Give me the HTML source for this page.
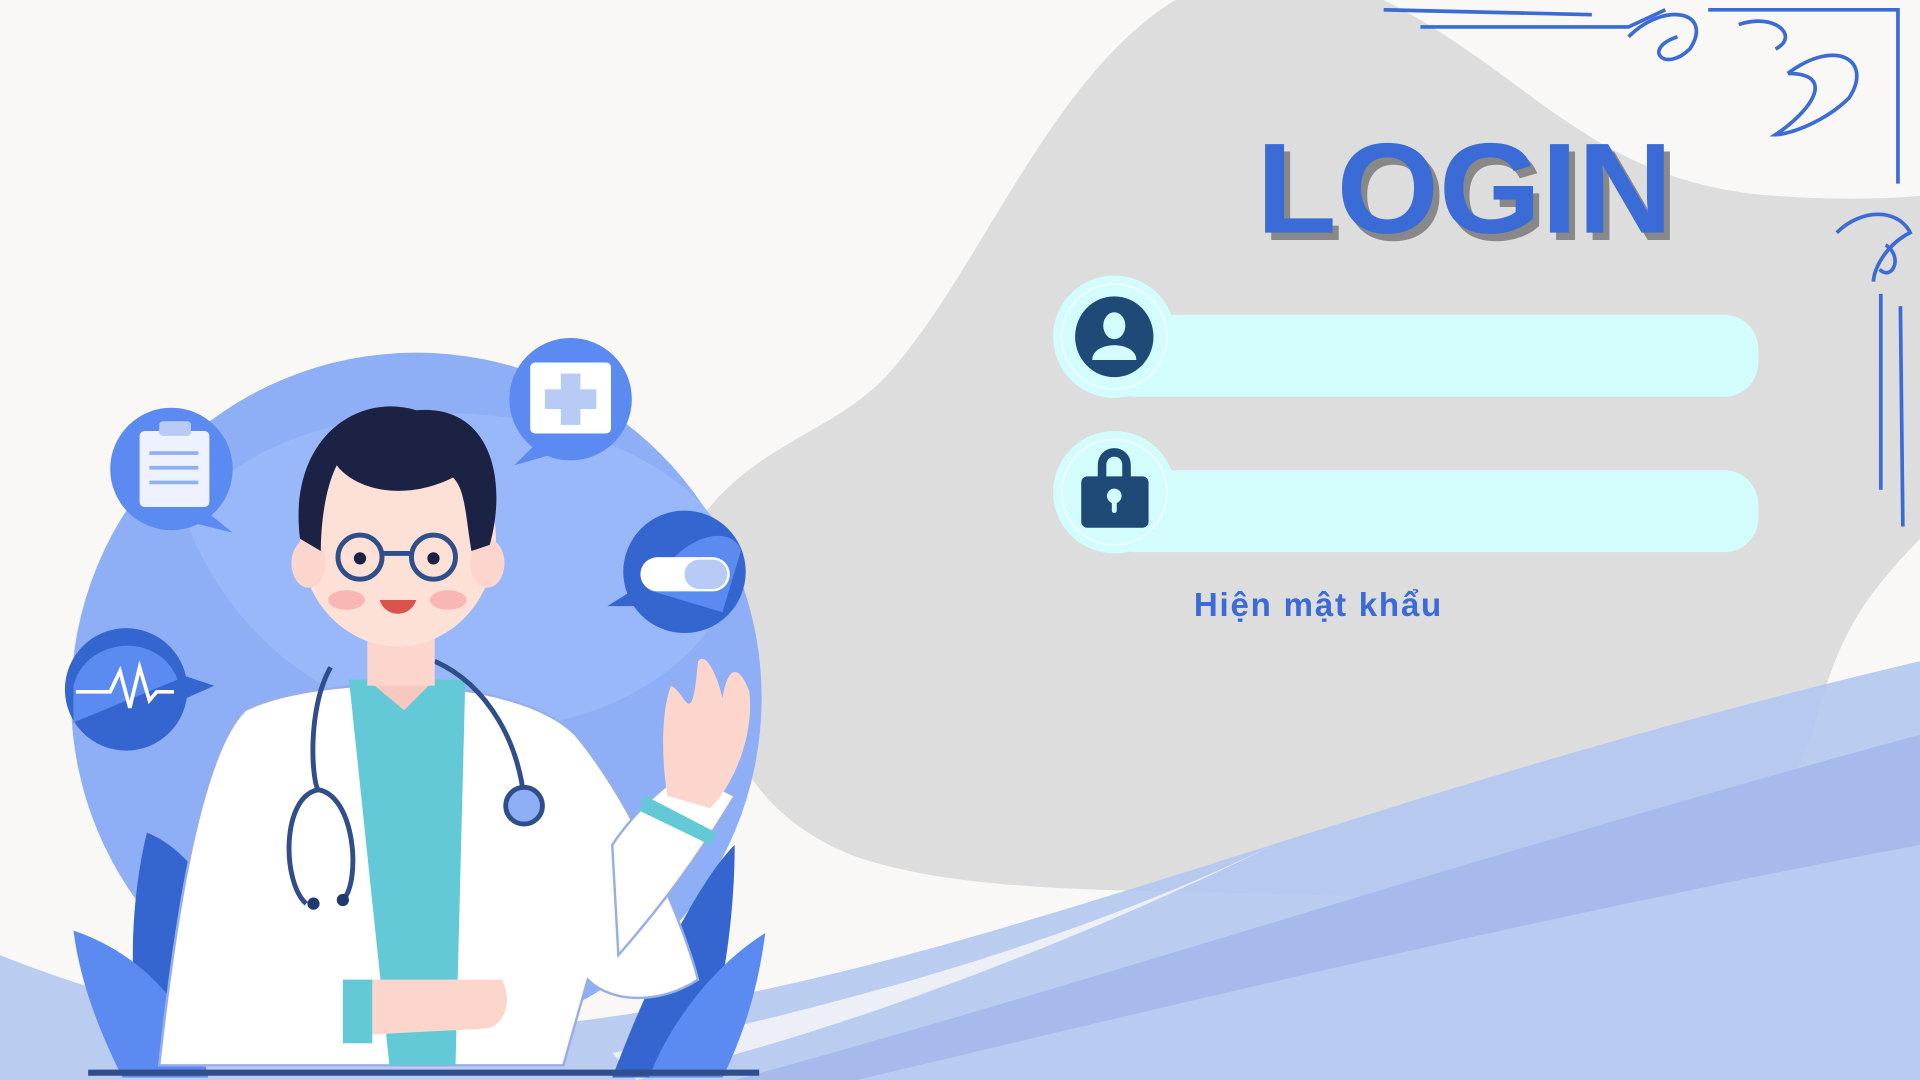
<!DOCTYPE html>
<html><head><meta charset="utf-8"><style>
html,body{margin:0;padding:0;width:1920px;height:1080px;overflow:hidden;background:#f9f8f6}
svg{display:block}
</style></head><body>
<svg width="1920" height="1080" viewBox="0 0 1568 882" xmlns="http://www.w3.org/2000/svg">
<rect width="1568" height="882" fill="#f9f8f6"/>
<path d="M575,420 C620,360 690,350 730,300 C800,220 860,60 960,0 L1130,0 C1250,60 1300,150 1450,160 C1520,165 1568,160 1568,160 L1568,440 C1520,490 1500,520 1480,600 C1440,700 1380,750 1250,740 C1000,720 820,740 700,700 C620,670 560,600 575,420 Z" fill="#dddddd"/>
<path d="M0,780 C150,840 300,860 500,830 C800,790 1100,650 1568,540 L1568,882 L0,882 Z" fill="#b4c7f1" opacity="0.9"/>
<path d="M600,882 C900,800 1200,700 1568,600 L1568,882 Z" fill="#a6bbec"/>
<path d="M700,882 C1000,810 1300,740 1568,690 L1568,882 Z" fill="#b8cbf3"/>
<path d="M500,860 C700,820 900,760 1050,685 C900,760 700,840 520,882 Z" fill="#f9f8f6" opacity="0.8"/>
<path d="M40,715 C120,790 250,830 450,830 C300,840 150,820 40,715Z" fill="#f9f8f6" opacity="0.6"/>
<g fill="none" stroke="#3a6bd6" stroke-width="3">
<path d="M1130,8 L1300,12 M1160,22 L1330,22 L1360,8"/>
<path d="M1395,8 L1550,8 L1550,150"/>
<path d="M1536,240 L1536,400 M1552,250 L1554,430"/>
<path d="M1330,30 C1360,0 1400,10 1380,40 C1360,60 1340,40 1370,30"/>
<path d="M1420,20 C1450,10 1470,30 1450,40 M1460,60 C1500,30 1530,50 1510,80 C1490,100 1460,110 1450,110 C1480,90 1500,60 1460,60"/>
<path d="M1500,190 C1520,170 1550,170 1560,190 C1540,200 1530,220 1530,230 M1540,200 C1555,210 1545,230 1535,220"/>
</g>
<text x="1026" y="190" font-family="Liberation Sans, sans-serif" font-weight="bold" font-size="105" fill="#888" transform="translate(5,6)" textLength="340" lengthAdjust="spacingAndGlyphs">LOGIN</text>
<text x="1026" y="190" font-family="Liberation Sans, sans-serif" font-weight="bold" font-size="105" fill="#3a6bd6" textLength="340" lengthAdjust="spacingAndGlyphs">LOGIN</text>
<rect x="900" y="257" width="536" height="67" rx="28" fill="#d3fcfc"/>
<circle cx="910" cy="275" r="50" fill="#d3fcfc"/>
<circle cx="910" cy="275" r="43" fill="none" stroke="#f0ffff" stroke-width="1.5"/>
<ellipse cx="910" cy="275" rx="32" ry="33" fill="#1f4a78"/>
<ellipse cx="910" cy="266" rx="9" ry="11" fill="#d3fcfc"/>
<path d="M892,294 C892,278 928,278 928,294 Z" fill="#d3fcfc"/>
<rect x="900" y="384" width="536" height="67" rx="28" fill="#d3fcfc"/>
<circle cx="910" cy="402" r="50" fill="#d3fcfc"/>
<circle cx="910" cy="402" r="43" fill="none" stroke="#f0ffff" stroke-width="1.5"/>
<path d="M900,390 L900,380 C900,366 920,366 920,380 L920,390" fill="none" stroke="#1f4a78" stroke-width="7"/>
<rect x="883" y="389" width="55" height="42" rx="5" fill="#1f4a78"/>
<circle cx="910" cy="405" r="6" fill="#d3fcfc"/><rect x="908" y="405" width="4" height="14" rx="2" fill="#d3fcfc"/>
<text x="975" y="503" font-family="Liberation Sans, sans-serif" font-weight="bold" font-size="27" fill="#3a6bd6" textLength="202">Hiện mật khẩu</text>
<circle cx="340" cy="570" r="282" fill="#8eaef5"/>
<path d="M150,420 C250,300 500,320 580,420 C630,480 560,560 470,585 C340,620 200,560 150,420Z" fill="#9bbafa" opacity="0.8"/>
<circle cx="140" cy="383" r="50" fill="#5b8af0"/><path d="M165,415 L190,435 L150,425Z" fill="#5b8af0"/>
<rect x="114" y="352" width="57" height="62" rx="4" fill="#eef2ff"/><rect x="130" y="344" width="26" height="12" rx="3" fill="#b8cbf7"/>
<g stroke="#8eaef5" stroke-width="3"><line x1="122" y1="370" x2="162" y2="370"/><line x1="122" y1="382" x2="162" y2="382"/><line x1="122" y1="394" x2="162" y2="394"/></g>
<circle cx="466" cy="326" r="50" fill="#5b8af0"/><path d="M440,360 L420,380 L455,370Z" fill="#5b8af0"/>
<rect x="433" y="296" width="66" height="58" rx="4" fill="#fff"/>
<path d="M458,305 h16 v13 h13 v16 h-13 v13 h-16 v-13 h-13 v-16 h13Z" fill="#b8cbf7"/>
<circle cx="559" cy="467" r="50" fill="#3566d0"/><path d="M530,482 C560,430 600,430 605,450 L590,500Z" fill="#5b8af0"/><path d="M520,480 L496,495 L530,495Z" fill="#3566d0"/>
<rect x="523" y="455" width="73" height="28" rx="14" fill="#fff"/><rect x="559" y="457" width="35" height="24" rx="12" fill="#b8cbf7"/>
<circle cx="103" cy="563" r="50" fill="#3566d0"/><path d="M60,560 C70,520 130,515 145,555 L60,590Z" fill="#5b8af0"/><path d="M145,550 L175,560 L148,572Z" fill="#3566d0"/>
<polyline points="62,565 90,565 98,548 106,578 114,545 122,572 128,565 142,565" fill="none" stroke="#fff" stroke-width="3"/>
<path d="M120,680 C170,700 210,780 200,870 L120,870 C100,800 110,720 120,680Z" fill="#3566d0"/>
<path d="M60,760 C120,780 160,830 170,880 L100,880 C80,840 65,800 60,760Z" fill="#5b8af0"/>
<path d="M600,690 C570,720 530,800 500,880 L570,880 C590,820 600,750 600,690Z" fill="#3566d0"/>
<path d="M625,762 C580,790 545,840 530,880 L590,880 C610,840 620,800 625,762Z" fill="#5b8af0"/>
<path d="M200,580 C260,550 420,550 470,600 C520,660 560,760 570,800 C540,820 500,820 480,800 L460,870 L130,870 C140,780 160,620 200,580Z" fill="#ffffff" stroke="#98aee8" stroke-width="2"/>
<path d="M285,555 L380,555 L372,870 L318,870Z" fill="#63c9d6"/>
<path d="M300,555 L330,580 L355,555Z" fill="#f7c8bf"/>
<path d="M500,690 C520,660 545,640 560,630 L600,650 C570,700 540,740 505,780Z" fill="#fff" stroke="#98aee8" stroke-width="2"/>
<path d="M527,650 L585,680 L580,690 L522,662Z" fill="#63c9d6"/>
<path d="M545,650 C540,620 540,580 548,560 C560,565 565,600 570,540 C578,530 588,560 590,570 C595,540 605,545 612,565 C616,600 600,640 580,660Z" fill="#fcd6cd"/>
<path d="M300,800 L410,800 C420,820 410,840 395,840 L300,845Z" fill="#fcd6cd"/>
<rect x="280" y="800" width="24" height="52" fill="#63c9d6"/>
<path d="M270,545 C250,580 255,640 260,645 C230,650 230,720 250,738 M260,645 C290,650 295,720 280,735 M355,540 C400,560 425,610 428,655" fill="none" stroke="#2f4e8a" stroke-width="4"/>
<circle cx="428" cy="658" r="15" fill="#8eaef5" stroke="#2f4e8a" stroke-width="4"/>
<circle cx="256" cy="738" r="5" fill="#1f3a6e"/><circle cx="280" cy="735" r="5" fill="#1f3a6e"/>
<rect x="300" y="500" width="55" height="60" fill="#fcd6cd"/>
<ellipse cx="325" cy="440" rx="80" ry="88" fill="#fde0d6"/>
<ellipse cx="252" cy="460" rx="14" ry="20" fill="#fcd6cd"/><ellipse cx="398" cy="460" rx="14" ry="20" fill="#fcd6cd"/>
<path d="M245,440 C235,360 290,320 340,335 C400,330 415,390 400,445 L385,450 C380,420 380,400 370,390 C330,410 290,400 275,380 C265,400 262,430 262,450Z" fill="#1b2244"/>
<circle cx="294" cy="455" r="18" fill="none" stroke="#2f4e8a" stroke-width="4"/><circle cx="354" cy="455" r="18" fill="none" stroke="#2f4e8a" stroke-width="4"/>
<line x1="312" y1="452" x2="336" y2="452" stroke="#2f4e8a" stroke-width="4"/>
<circle cx="294" cy="456" r="5" fill="#1b2244"/><circle cx="354" cy="456" r="5" fill="#1b2244"/>
<ellipse cx="283" cy="490" rx="15" ry="8" fill="#f9b7b4"/><ellipse cx="366" cy="490" rx="15" ry="8" fill="#f9b7b4"/>
<path d="M310,490 C315,505 335,505 340,490Z" fill="#d9534f"/>
<line x1="72" y1="876" x2="620" y2="876" stroke="#2f4e8a" stroke-width="5"/>
</svg>
</body></html>
